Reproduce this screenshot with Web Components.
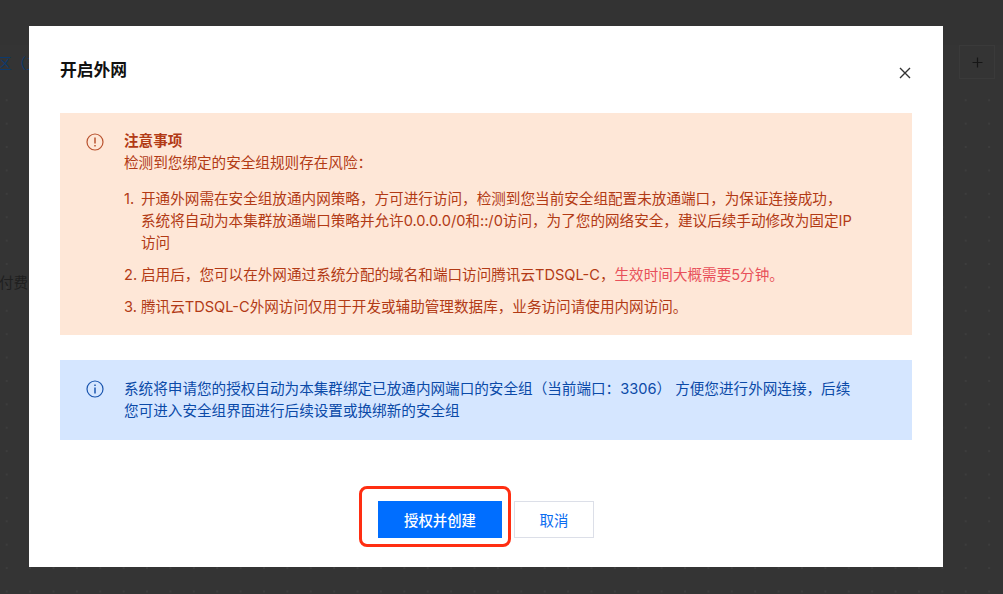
<!DOCTYPE html>
<html lang="zh-CN"><head><meta charset="utf-8"><title>开启外网</title>
<style>
html,body{margin:0;height:100%;overflow:hidden}
body{font-family:"Inter","Noto Sans CJK SC",sans-serif;background:#333}
</style></head>
<body>
<x-console>
  <x-modal heading="开启外网">
    <x-alert kind="warn">
      <strong>注意事项</strong>
      <div>检测到您绑定的安全组规则存在风险：</div>
      <x-item n="1.">开通外网需在安全组放通内网策略，方可进行访问，检测到您当前安全组配置未放通端口，为保证连接成功， 系统将自动为本集群放通端口策略并允许0.0.0.0/0和::/0访问，为了您的网络安全，建议后续手动修改为固定IP访问</x-item>
      <x-item n="2.">启用后，您可以在外网通过系统分配的域名和端口访问腾讯云TDSQL-C，<span style="color:#e8505a">生效时间大概需要5分钟。</span></x-item>
      <x-item n="3.">腾讯云TDSQL-C外网访问仅用于开发或辅助管理数据库，业务访问请使用内网访问。</x-item>
    </x-alert>
    <x-alert kind="info">系统将申请您的授权自动为本集群绑定已放通内网端口的安全组（当前端口：3306） 方便您进行外网连接，后续您可进入安全组界面进行后续设置或换绑新的安全组</x-alert>
    <x-button slot="footer" kind="primary" marked>授权并创建</x-button>
    <x-button slot="footer">取消</x-button>
  </x-modal>
</x-console>
<script>
class XConsole extends HTMLElement{constructor(){super();this.attachShadow({mode:'open'}).innerHTML=`<style>
:host{display:block;position:relative;width:100%;height:100%;overflow:hidden;background:#343434;color:#1c1c1c;font-size:14.6px}
.page{display:grid;grid-template-rows:45px 34px 1fr;height:100%;
 background-image:radial-gradient(circle,#3d3d3d 0 1px,transparent 1.3px);background-size:23.4px 23.4px;background-position:-5px -5px}
.top{background:#333}
.tabs{display:flex;align-items:center;justify-content:space-between;background:#343434}
.tab{color:#0c3a6e;margin-left:-3px;white-space:nowrap}
.add{box-sizing:border-box;width:36px;height:34px;margin-right:8px;border:1px solid #3a3a3a;display:flex;align-items:center;justify-content:center}
.body{display:flex;flex-direction:column;padding-top:192px}
.fee{color:#1f1f1f;margin-left:-1px}
.over{position:absolute;inset:0;display:flex;align-items:flex-start;padding:26px 60px 0 29px}
</style>
<div class="page">
<div class="top"></div>
<div class="tabs"><span class="tab">区（三</span><span class="add"><svg width="13" height="13" viewBox="0 0 13 13"><path d="M6.5 1.5v10M1.5 6.5h10" stroke="#161616" stroke-width="1.2"/></svg></span></div>
<div class="body"><span class="fee">付费</span></div>
</div>
<div class="over"><slot></slot></div>`}}
class XModal extends HTMLElement{constructor(){super();this.attachShadow({mode:'open'}).innerHTML=`<style>
:host{display:block;position:relative;box-sizing:border-box;width:914px;height:541px;background:#fff;padding:32px 31px 30px}
h2{margin:0 0 31px;font-size:16.8px;line-height:24px;font-weight:600;color:#111}
.close{position:absolute;top:41px;right:32px;width:12px;height:12px}
.main{display:flex;flex-direction:column;gap:25px}
footer{display:flex;justify-content:center;gap:12px;margin-top:61px}
</style><h2></h2>
<svg class="close" viewBox="0 0 12 12"><path d="M1 1l10 10M11 1L1 11" stroke="#333" stroke-width="1.4" fill="none"/></svg>
<div class="main"><slot></slot></div><footer><slot name="footer"></slot></footer>`}
connectedCallback(){this.shadowRoot.querySelector('h2').textContent=this.getAttribute('heading')}}
class XAlert extends HTMLElement{constructor(){super();this.attachShadow({mode:'open'}).innerHTML=`<style>
:host{display:grid;grid-template-columns:18px 1fr;column-gap:20px;padding:18px 52px 17px 26px;line-height:21.5px;font-size:14.6px}
:host([kind=warn]){background:#fee7d7;color:#b23a15}
:host([kind=info]){background:#d5e6ff;color:#0b4aa8;line-height:22px;padding-bottom:18px}
svg{width:18px;height:18px;margin-top:2px;display:block}
.warn,.info{display:none}
:host([kind=warn]) .warn,:host([kind=info]) .info{display:block}
</style>
<div>
<svg class="warn" viewBox="0 0 18 18" fill="none" stroke="#b9532f"><circle cx="9" cy="9" r="8" stroke-width="1.2"/><path d="M9 4.5v6" stroke-width="1.5"/><path d="M9 12v1.6" stroke-width="1.5"/></svg>
<svg class="info" viewBox="0 0 18 18" fill="none" stroke="#1a55ae"><circle cx="9" cy="9" r="8" stroke-width="1.2"/><path d="M9 7.5v6" stroke-width="1.5"/><path d="M9 4.4V6" stroke-width="1.5"/></svg>
</div><div><slot></slot></div>`}}
class XItem extends HTMLElement{constructor(){super();this.attachShadow({mode:'open'}).innerHTML=`<style>
:host{display:grid;grid-template-columns:17px 1fr;margin-top:10px;line-height:22px}
:host([n="1."]){margin-top:14px}
</style><span></span><div><slot></slot></div>`}
connectedCallback(){this.shadowRoot.querySelector('span').textContent=this.getAttribute('n')}}
class XButton extends HTMLElement{constructor(){super();this.attachShadow({mode:'open'}).innerHTML=`<style>
:host{display:flex;position:relative;box-sizing:border-box;width:80px;height:37px;align-items:center;justify-content:center;font-size:14.4px;background:#fff;border:1px solid #dcdfe8;color:#0a6cf0}
:host([kind=primary]){width:124px;background:#006eff;border-color:#006eff;color:#fff;font-weight:500}
:host([marked])::after{content:"";position:absolute;left:-20px;right:-10px;top:-16px;bottom:-10px;border:3px solid #ff2e12;border-radius:8px}
</style><slot></slot>`}}
customElements.define('x-console',XConsole);
customElements.define('x-modal',XModal);
customElements.define('x-alert',XAlert);
customElements.define('x-item',XItem);
customElements.define('x-button',XButton);
</script>
</body></html>
